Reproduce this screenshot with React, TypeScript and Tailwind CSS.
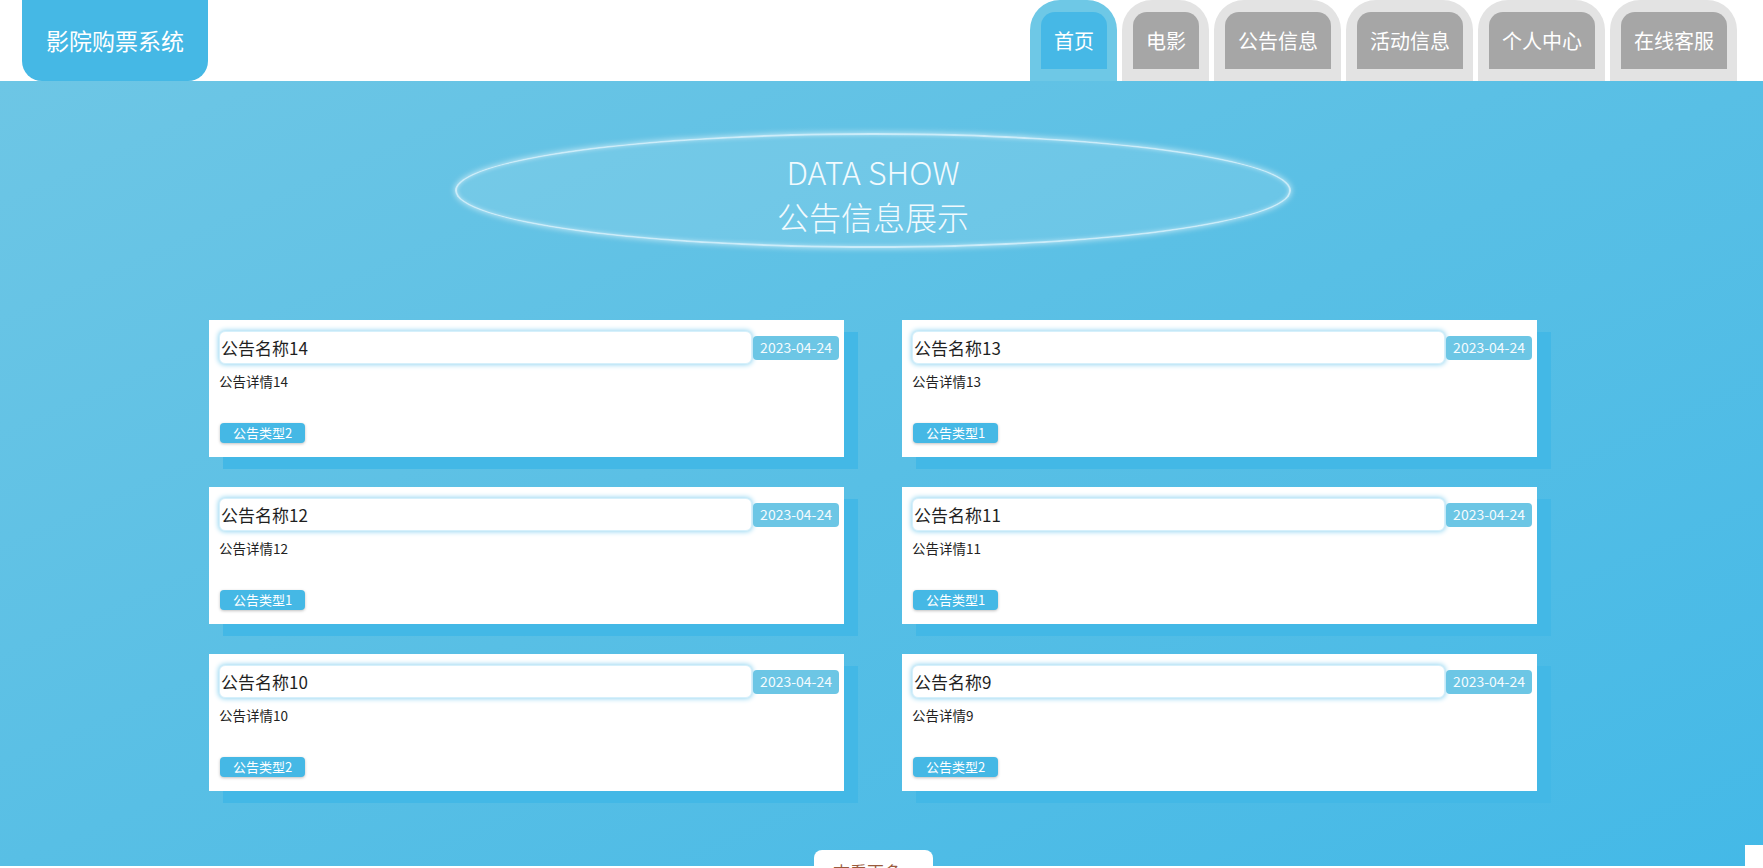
import React from "react";

const navItems = ["首页", "电影", "公告信息", "活动信息", "个人中心", "在线客服"];

const notices = [
  { name: "公告名称14", detail: "公告详情14", type: "公告类型2" },
  { name: "公告名称13", detail: "公告详情13", type: "公告类型1" },
  { name: "公告名称12", detail: "公告详情12", type: "公告类型1" },
  { name: "公告名称11", detail: "公告详情11", type: "公告类型1" },
  { name: "公告名称10", detail: "公告详情10", type: "公告类型2" },
  { name: "公告名称9", detail: "公告详情9", type: "公告类型2" },
];

function NoticeCard({ item }: { item: (typeof notices)[number] }) {
  return (
    <div className="flex h-[137px] flex-col bg-white pl-[10px] pr-[5px] pt-[11px] shadow-[14px_12px_0_0_#43b8e6]">
      <div className="flex items-center">
        <div className="flex h-[33px] flex-1 items-center rounded-md border border-[#d6f0fb] bg-white pl-px text-[17px] text-[#1f1f1f] shadow-[0_0_5px_1px_#9ad8f2]">
          {item.name}
        </div>
        <span className="ml-px flex h-[24px] items-center rounded-[4px] bg-[#6cc6e5] px-[7px] text-[14px] text-[#f4fbfe]">
          2023-04-24
        </span>
      </div>
      <div className="mt-[7px] text-[13.5px] text-[#222]">{item.detail}</div>
      <div className="mt-auto mb-[14px]">
        <span className="ml-px inline-flex h-[20px] items-center rounded-[4px] bg-[#45b8e5] px-[13px] text-[13px] text-white shadow-[0_1px_3px_rgba(0,0,0,0.25)]">
          {item.type}
        </span>
      </div>
    </div>
  );
}

export default function App() {
  return (
    <div className="min-h-screen bg-white font-['Noto_Sans_CJK_SC','Microsoft_YaHei',sans-serif]">
      {/* Header */}
      <header className="flex h-[81px] items-stretch justify-between bg-white">
        <div className="ml-[22px] flex w-[186px] items-center justify-center rounded-b-[20px] bg-[#45b8e5] pb-[1px] text-[23px] text-white">
          影院购票系统
        </div>
        <nav className="mr-[26px] flex items-end gap-[5px]">
          {navItems.map((label, i) => {
            const active = i === 0;
            return (
              <div
                key={label}
                className={`flex h-[81px] flex-col rounded-t-[30px] pl-[11px] pr-[10px] pt-[12px] ${
                  active ? "bg-[#6ec8e6]" : "bg-[#e3e3e3]"
                }`}
              >
                <div
                  className={`flex h-[57px] items-center justify-center rounded-t-[14px] px-[13px] text-[20px] text-white ${
                    active ? "bg-[#46b8e6]" : "bg-[#a6a6a6]"
                  }`}
                >
                  {label}
                </div>
              </div>
            );
          })}
        </nav>
      </header>

      {/* Main */}
      <main className="bg-gradient-to-br from-[#6dc6e5] via-[#58bfe5] to-[#44b9e7] pr-[17px] pt-[52px]">
        <div className="mx-auto flex h-[115px] w-[836px] flex-col items-center rounded-[50%] border-2 border-[#e2f5fc]/80 bg-white/10 pt-[16px] shadow-[0_0_6px_rgba(255,255,255,0.7),inset_0_0_4px_rgba(255,255,255,0.5)]">
          <div className="text-[32px] font-light leading-[40px] text-[#f1fafe]">DATA SHOW</div>
          <div className="text-[32px] font-light leading-[50px] text-[#f1fafe]">公告信息展示</div>
        </div>

        <div className="mx-auto mt-[72px] w-[1328px]">
          <div className="grid grid-cols-[635px_635px] gap-x-[58px] gap-y-[30px]">
            {notices.map((n) => (
              <NoticeCard key={n.name} item={n} />
            ))}
          </div>
        </div>

        <div className="mt-[59px] flex h-[16px] justify-center">
          <div className="flex h-[40px] w-[119px] justify-center rounded-t-[8px] bg-white pt-[9px] text-[17px] text-[#9a5a3c]">
            查看更多 »
          </div>
        </div>
      </main>

      <div className="h-[300px] bg-white" />

      <div className="fixed bottom-0 right-0 h-[23px] w-[18px] bg-white" />
    </div>
  );
}
